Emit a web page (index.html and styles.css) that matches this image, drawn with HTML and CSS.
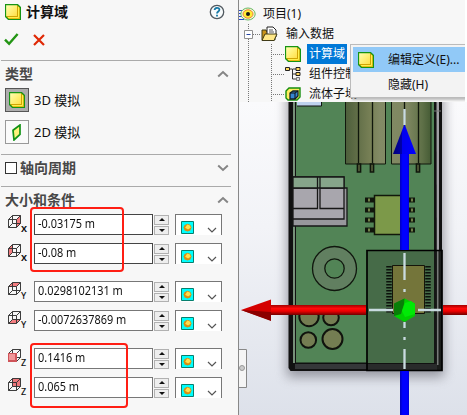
FILE: index.html
```
<!DOCTYPE html>
<html lang="zh-CN">
<head>
<meta charset="utf-8">
<title>计算域</title>
<link rel="stylesheet" href="styles.css">
</head>
<body>
<svg width="0" height="0" class="defs" aria-hidden="true">
  <defs>
    <linearGradient id="gold" x1="0" y1="0" x2="1" y2="1"><stop offset="0" stop-color="#ffffb4"/><stop offset=".5" stop-color="#fff17a"/><stop offset="1" stop-color="#ffdf48"/></linearGradient>
    <symbol id="domain" viewBox="0 0 16 16"><path d="M.5.5h12l3 3v12h-12l-3-3z" fill="#e8ba12"/><path d="M1 1h11v11H1z" fill="url(#gold)"/><path d="M3 13.500h10.500V3" fill="none" stroke="#fff04c"/><path d="M2 12.500h10.500V1" fill="none" stroke="#c79b00" stroke-width=".7"/><path d="M.5.5h12l3 3v12h-12l-3-3z" fill="none" stroke="#169414" stroke-width="1.250"/></symbol>
    <symbol id="up" viewBox="0 0 12 8"><path d="M1.2 6.4 6 2l4.8 4.4" fill="none" stroke="#858585" stroke-width="2"/></symbol>
    <symbol id="down" viewBox="0 0 12 8"><path d="M1.2 1.6 6 6l4.8-4.4" fill="none" stroke="#858585" stroke-width="2"/></symbol>
    <symbol id="cube" viewBox="0 0 14 14"><path d="M.5 4.500h8v8h-8zM.5 4.500l4-4h8v8l-4 4M8.500 4.500l4-4M4.500.5v8h8M4.500 8.500l-4 4" fill="none" stroke="#333" stroke-width=".95"/></symbol>
    <symbol id="goal" viewBox="0 0 13 13"><path d="M.5.5h12v12H.5z" fill="#0ff" stroke="#087f6d"/><path d="m6.500 2.800 3 1.100 1 2.700-1.100 2.900-2.900 1.100-2.900-1.100-1.100-2.900 1.100-2.700z" fill="#d98e10"/><path d="m6.300 3.500 2.600.9.800 2.400-2.600 1.600-3-1.600z" fill="#ffe04c"/></symbol>
  </defs>
</svg>
<div class="app">
  <aside class="panel">
    <header class="title"><svg class="i16"><use href="#domain"/></svg><b>计算域</b>
      <svg class="help" viewBox="0 0 16 16"><circle cx="8" cy="8" r="6.7" fill="#f8fbfc" stroke="#515960" stroke-width="1.3"/><path d="M5.6 6.1C5.6 3.2 10.4 3 10.4 5.7 10.4 7.5 8 7.4 8 9.5M8 10.7v1.7" fill="none" stroke="#1678a5" stroke-width="1.8"/></svg>
    </header>
    <div class="actions">
      <svg width="15" height="13" viewBox="0 0 15 13"><path d="m1 6.6 4.1 4.2L13.6 1" fill="none" stroke="#239514" stroke-width="2.4"/></svg>
      <svg width="12" height="12" viewBox="0 0 12 12"><path d="m1 1 10 10M11 1 1 11" stroke="#df2805" stroke-width="2.2"/></svg>
    </div>
    <section class="kind">
      <div class="head"><b>类型</b><svg class="chev"><use href="#up"/></svg></div>
      <div class="option"><span class="tool on"><svg class="i16"><use href="#domain"/></svg></span><span>3D 模拟</span></div>
      <div class="option"><span class="tool"><svg width="10" height="17" viewBox="0 0 10 17"><path d="M1 6.3 8 1v9.5L2 16z" fill="#fff27b" stroke="#129316" stroke-width="1.7"/></svg></span><span>2D 模拟</span></div>
    </section>
    <section class="period"><div class="head"><i class="check"></i><b>轴向周期</b><svg class="chev"><use href="#down"/></svg></div></section>
    <section class="size">
      <div class="head"><b>大小和条件</b><svg class="chev"><use href="#up"/></svg></div>
      <div class="fields">
        <div class="pair">
          <div class="row"><div class="axis"><svg viewBox="0 0 14 14"><path d="m8.500 4.500 4-4v8l-4 4z" fill="#f47d80"/><use href="#cube"/></svg><b>X</b></div><div class="value dark"><span>-0.03175 m</span></div><div class="spin"><i></i><i></i></div><div class="select"><svg class="goal"><use href="#goal"/></svg><svg class="arrow" viewBox="0 0 10 6"><path d="m1 1 4 4 4-4"/></svg></div></div>
          <div class="row"><div class="axis"><svg viewBox="0 0 14 14"><path d="m.5 4.500 4-4v8l-4 4z" fill="#f47d80"/><use href="#cube"/></svg><b>X</b></div><div class="value dark"><span>-0.08 m</span></div><div class="spin"><i></i><i></i></div><div class="select"><svg class="goal"><use href="#goal"/></svg><svg class="arrow" viewBox="0 0 10 6"><path d="m1 1 4 4 4-4"/></svg></div></div>
          <div class="mark first"></div>
        </div>
        <div class="pair">
          <div class="row"><div class="axis"><svg viewBox="0 0 14 14"><path d="m.5 4.500 4-4h8l-4 4z" fill="#f47d80"/><use href="#cube"/></svg><b class="thin">Y</b></div><div class="value"><span>0.0298102131 m</span></div><div class="spin"><i></i><i></i></div><div class="select"><svg class="goal"><use href="#goal"/></svg><svg class="arrow" viewBox="0 0 10 6"><path d="m1 1 4 4 4-4"/></svg></div></div>
          <div class="row"><div class="axis"><svg viewBox="0 0 14 14"><path d="m.5 12.500 4-4h8l-4 4z" fill="#f47d80"/><use href="#cube"/></svg><b class="thin">Y</b></div><div class="value"><span>-0.0072637869 m</span></div><div class="spin"><i></i><i></i></div><div class="select"><svg class="goal"><use href="#goal"/></svg><svg class="arrow" viewBox="0 0 10 6"><path d="m1 1 4 4 4-4"/></svg></div></div>
        </div>
        <div class="pair">
          <div class="row"><div class="axis"><svg viewBox="0 0 14 14"><use href="#cube"/><path d="M0 4h9v9H0z" fill="#cf5459"/><path d="M1 5h6v6H1z" fill="#f09799"/></svg><b class="thin">Z</b></div><div class="value"><span>0.1416 m</span></div><div class="spin"><i></i><i></i></div><div class="select"><svg class="goal"><use href="#goal"/></svg><svg class="arrow" viewBox="0 0 10 6"><path d="m1 1 4 4 4-4"/></svg></div></div>
          <div class="row"><div class="axis"><svg viewBox="0 0 14 14"><path d="M4.500.5h8v8h-8z" fill="#ec777b"/><use href="#cube"/></svg><b class="thin">Z</b></div><div class="value"><span>0.065 m</span></div><div class="spin"><i></i><i></i></div><div class="select"><svg class="goal"><use href="#goal"/></svg><svg class="arrow" viewBox="0 0 10 6"><path d="m1 1 4 4 4-4"/></svg></div></div>
          <div class="mark last"></div>
        </div>
      </div>
    </section>
  </aside>
  <main class="work">
    <div class="tree">
      <svg class="lines" viewBox="0 0 227 102"><path d="M9.5 24v6M9.5 39v63M14 34.5h8M32.500 44v58M34 54.5h11M34 74.500h11M34 94.500h11" fill="none" stroke="#777" stroke-dasharray="1 1"/><path d="M5.500 30.500h8v8h-8z" fill="#fff" stroke="#909090"/><path d="M7.500 34.500h4" stroke="#2646a4"/></svg>
      <div class="node root"><svg width="17" height="16" viewBox="0 0 17 16"><path d="M0 4.500h4M0 7.500h3M0 10.500h3M0 13.500h5" stroke="#2547d5"/><ellipse cx="9" cy="8" rx="7.200" ry="6" fill="#f4f8dc" stroke="#68b862"/><ellipse cx="9" cy="8" rx="5" ry="4.200" fill="#ffec32" stroke="#ed823d"/><circle cx="9" cy="8" r="2" fill="#171717"/></svg><span>项目(1)</span></div>
      <div class="node inputs"><svg width="17" height="16" viewBox="0 0 17 16"><path d="M1 14V4h4l1 2h8v8z" fill="#c99319" stroke="#3d3d1d"/><path d="M6 1h6l3 3v7H6z" fill="#fff" stroke="#222"/><path d="M8 4h4M8 6h5" stroke="#555"/><path d="M1 14.500 4 8h12l-3 6.500z" fill="#ffe887" stroke="#403b17"/></svg><span>输入数据</span></div>
      <div class="node leaf"><svg class="i16"><use href="#domain"/></svg><span class="chosen">计算域</span></div>
      <div class="node leaf"><svg width="16" height="16" viewBox="0 0 16 16"><path d="M4 3h3.500v10h4M8 3h4M8 8h4" fill="none" stroke="#333"/><path d="M.5 1.500h4v3h-4z" fill="#ffd95c" stroke="#222"/><path d="M11 1.500h4v3h-4zM11 6.500h4v3h-4z" fill="#ffd65c" stroke="#222"/><path d="M11.500 11.500h3v3h-3z" fill="#ddd" stroke="#777"/></svg><span>组件控制</span></div>
      <div class="node leaf"><svg width="16" height="14" viewBox="0 0 16 14"><path d="M1 4 4 1h11v9l-3 3H3l-2-2z" fill="#ffed5e" stroke="#168e0d" stroke-width="1.400"/><path d="m5 6 3-2h5v5l-3 3H5z" fill="#3685d1" stroke="#14202b" stroke-width="1.300"/><path d="M5 6h5v6M10 6l3-2" fill="none" stroke="#111"/></svg><span>流体子域</span></div>
      <div class="menu"><div class="item active"><svg class="i16"><use href="#domain"/></svg><span>编辑定义(E)...</span></div><div class="item"><i class="blank"></i><span>隐藏(H)</span></div></div>
    </div>
    <svg class="scene" viewBox="239 102 228 313">
      <defs>
        <linearGradient id="bg" x1="0" y1="0" x2="0" y2="1"><stop offset="0" stop-color="#fafafc"/><stop offset=".4" stop-color="#f2f3f7"/><stop offset="1" stop-color="#dde1ea"/></linearGradient>
        <linearGradient id="can" x1="0" x2="1"><stop offset="0" stop-color="#4d5e3b"/><stop offset=".28" stop-color="#767f55"/><stop offset=".4" stop-color="#828a65"/><stop offset=".72" stop-color="#7f8761"/><stop offset=".9" stop-color="#5e7047"/><stop offset="1" stop-color="#455b35"/></linearGradient>
        <linearGradient id="red" x1="0" y1="0" x2="0" y2="1"><stop offset="0" stop-color="#a30000"/><stop offset=".35" stop-color="#ff0909"/><stop offset=".6" stop-color="#f00000"/><stop offset="1" stop-color="#6f0000"/></linearGradient>
        <linearGradient id="blue"><stop offset="0" stop-color="#0000ba"/><stop offset=".3" stop-color="#00f"/><stop offset=".8" stop-color="#00f"/><stop offset="1" stop-color="#0000d5"/></linearGradient>
        <linearGradient id="cone"><stop offset="0" stop-color="#000078"/><stop offset=".38" stop-color="#0000a9"/><stop offset=".4" stop-color="#0000ef"/><stop offset="1" stop-color="#00f"/></linearGradient>
        <filter id="soft" x="-30%" y="-20%" width="160%" height="140%"><feGaussianBlur stdDeviation="6"/></filter>
      </defs>
      <path d="M239 102h228v313H239z" fill="url(#bg)"/>
      <path d="M287 90h157v287H287z" fill="#6b6b74" opacity=".65" filter="url(#soft)"/>
      <path d="M288.500 102H442v269H290.500l-2-3z" fill="#111"/>
      <path d="M293 102h3v261h-3z" fill="#779079"/><path d="M296 102h138v261H296z" fill="#528456"/>
      <path d="M295.500 102v261H434" fill="none" stroke="#111"/><path d="M295 364h138v5H295z" fill="#353739"/>
      <path d="M436.500 102h2.500v263l-2 1z" fill="#a0a0a4"/><path d="M434 111h7" stroke="#777"/>
      <path d="M297 102h24.500v4H297z" fill="#bed2ed"/><path d="M297 106h24.500v-4" fill="none" stroke="#111"/>
      <g stroke="#10170c"><path d="M345.500 100h40v64h-40zM391.500 100h39.500v64h-39.500z" fill="url(#can)"/><path d="M358.500 102v61M372.500 102v61M404.500 102v61M418.500 102v61" stroke-width="1.300"/><path d="M357.500 164h3v8h-3zM370.500 164h3v8h-3zM416.500 164h3v8h-3z" fill="#6b734a" stroke-width="1.700"/></g>
      <g stroke="#171717" stroke-width="1.300"><path d="M293 188h54v38h-54z" fill="#98979c"/><path d="M293 177h51v42h-51z" fill="#a8a6ad"/><path d="M293 177h51v11h-51z" fill="#86a58a"/><path d="M293 188.500h24M320 188.500h24" stroke-width=".8"/><path d="M293 208.500h24.500V177M344 208.500h-24V177" fill="none"/></g>
      <path d="M365 197.500h9v5h-9zM365 207.500h9v5h-9zM365 217.500h9v5h-9zM365 227.500h9v5h-9zM408 197.500h7v5h-7zM408 207.500h7v5h-7zM408 217.500h7v5h-7zM408 227.500h7v5h-7z" fill="#11160c"/>
      <path d="M368 198.500h2v3h-2zM368 208.500h2v3h-2zM368 218.500h2v3h-2zM368 228.500h2v3h-2zM411 198.500h2v3h-2zM411 208.500h2v3h-2zM411 218.500h2v3h-2zM411 228.500h2v3h-2z" fill="#718149"/>
      <path d="M374.500 195.500h31v39h-31z" fill="#7c9949" stroke="#11180b" stroke-width="1.500"/>
      <g stroke="#10170e" stroke-width="1.300"><circle cx="334.500" cy="268.500" r="22" fill="#617f60"/><circle cx="334.500" cy="268.500" r="9.700" fill="#528456"/></g>
      <g fill="#747d52" stroke="#10130d" stroke-width="2"><circle cx="309" cy="316.500" r="9.700"/><circle cx="331" cy="317.500" r="7.800"/><circle cx="308.300" cy="340" r="7.800"/><circle cx="332.500" cy="339" r="10"/></g>
      <path d="M367 250.500h75v120h-75z" fill="#466b48"/><path d="M434 250h8v121h-8z" fill="#1b1d1b"/><path d="M437 251h1.500v114H437z" fill="#777b78"/><path d="M367 364h70v6h-70z" fill="#292b2b"/><path d="M367 363.500h68V251" fill="none" stroke="#111"/>
      <path d="M389 266v48M428 266v48" stroke="#0c120c" stroke-width="5.500" stroke-dasharray="1.500 1.500"/><path d="M392.500 265.500h32v48h-32z" fill="#74753a" stroke="#15150a"/>
      <path d="M367 250.500h75v120h-75z" fill="none" stroke="#000" stroke-width="1.700"/>
      <path d="M271 305h95v10h-95zM443 305h24v10h-24z" fill="url(#red)"/><path d="m241 310 30-10.500v21z" fill="#d40000"/><path d="m241 310 30 2v9z" fill="#8b0000"/>
      <path d="M400 153h9v97h-9zM400 371h9v44h-9z" fill="url(#blue)"/><path d="m404.500 124 11.500 30h-23z" fill="url(#cone)"/>
      <path d="M404.500 109v16M404.500 253v27M404.500 289v3M404.500 322v6M404.500 337v3M404.500 349v20M369 310h24M418 310h23" stroke="#c9dbe0" stroke-width="2.300"/>
      <path d="m404.500 298.500 10.500 5V316l-10.500 6-10.500-6v-12z" fill="#00cf00"/><path d="m404.500 298.500-10.500 5V316l7-2 3-10z" fill="#087e08"/><path d="m405 303 6-2 4 3v10l-10 3-3-6z" fill="#00ea06"/>
      <path d="M239 349h8v38h-8z" fill="#f5f5f5"/><path d="M239 349.500h7.500v38H239" fill="none" stroke="#888"/><circle cx="242" cy="368" r="2.500" fill="#ccc" stroke="#999"/>
    </svg>
  </main>
</div>
</body>
</html>
```
FILE: styles.css
```
* { box-sizing: border-box; }
body { margin: 0; font-family: "Noto Sans", "Noto Sans CJK SC", sans-serif; color: #111; overflow: hidden; }
svg { display: block; flex: none; }
.defs { position: absolute; }
.app { display: grid; grid-template-columns: 239px 228px; width: 467px; height: 415px; }
.panel { background: #f7f7f7; border-right: 1px solid #888; padding-left: 1px; }
.i16 { width: 16px; height: 16px; flex: none; }
.title { display: flex; align-items: center; height: 24px; padding-left: 4px; font-size: 14px; line-height: 20px; }
.title b { margin-left: 5px; }
.help { width: 16px; height: 16px; margin: 0 13px 0 auto; }
.actions { display: flex; gap: 14px; align-items: center; height: 36px; padding: 0 0 5px 3px; }
.panel section { width: 230px; border-top: 1px solid #aaa; }
.head { display: flex; align-items: center; height: 27px; padding: 0 2px 2px 4px; font-size: 14px; line-height: 20px; color: #484848; }
.kind { height: 94px; }
.period { height: 32px; }
.period .head { gap: 3px; }
.check { width: 12px; height: 12px; border: 1px solid #333; background: #fff; }
.chev { width: 12px; height: 8px; margin-left: auto; }
.option { display: flex; align-items: center; gap: 5px; height: 24px; margin-left: 4px; font-size: 13px; line-height: 18px; }
.option + .option { margin-top: 8px; }
.tool { width: 24px; height: 24px; border: 1px solid #999; background: #fafafa; display: grid; place-items: center; }
.tool.on { background: #adadad; border-color: #555; }
.fields { display: grid; gap: 17px; }
.pair { position: relative; display: grid; gap: 8px; }
.row { display: flex; height: 21px; padding-left: 7px; }
.axis { width: 26px; position: relative; padding-top: 1px; }
.axis svg { width: 14px; height: 14px; }
.axis b { position: absolute; left: 13px; top: 10px; font: bold 9px/10px "Noto Sans", sans-serif; }
.axis .thin { font-weight: 500; }
.value { width: 119px; border: 1px solid #777; background: #fff; font-size: 13px; line-height: 17px; padding-left: 3px; white-space: nowrap; }
.value.dark { border-color: #444; }
.value span { display: inline-block; transform: scaleX(.84); transform-origin: left; }
.spin { width: 15px; height: 20px; margin: 1px 6px 0 1px; display: grid; gap: 1px; }
.spin i { border: 1px solid #b1b1b1; background: #eee; display: grid; place-items: center; }
.spin i::before { content: ""; border: 3px solid transparent; border-top: 0; border-bottom: 3px solid #111; }
.spin i:last-child::before { border-bottom: 0; border-top: 3px solid #111; }
.select { width: 47px; height: 21px; border: 1px solid #777; border-bottom: 0; background: #fff; display: flex; padding: 6px 4px 0 5px; justify-content: space-between; }
.goal { width: 13px; height: 13px; }
.arrow { width: 10px; height: 6px; margin-top: 6px; fill: none; stroke: #555; stroke-width: 1.2; }
.mark { position: absolute; border: 2px solid #ff1e14; border-radius: 4px; }
.first { left: 29px; top: -7px; width: 94px; height: 65px; }
.last { left: 29px; top: -5px; width: 98px; height: 65px; }
.work { display: flex; flex-direction: column; min-width: 0; }
.tree { position: relative; height: 102px; width: 226px; background: #f7f7f7; padding-top: 3px; overflow: hidden; font-size: 12px; line-height: 20px; }
.lines { position: absolute; left: 0; top: 0; width: 227px; height: 102px; }
.node { position: relative; display: flex; align-items: center; height: 20px; white-space: nowrap; }
.root { height: 21px; gap: 7px; }
.inputs { padding-left: 22px; gap: 8px; }
.leaf { padding-left: 46px; gap: 6px; }
.leaf span { padding: 0 2px; height: 20px; }
.leaf .chosen { background: #0078d7; color: #fff; }
.menu { position: absolute; left: 111px; top: 44px; width: 120px; height: 54px; background: #f3f3f3; border: 1px solid #bbb; padding: 2px; box-shadow: 2px 2px 2px #8888; }
.item { display: flex; align-items: center; height: 25px; gap: 14px; padding-left: 5px; white-space: nowrap; }
.active { background: #91c9f7; }
.blank { width: 16px; }
.scene { width: 228px; height: 313px; }
```
